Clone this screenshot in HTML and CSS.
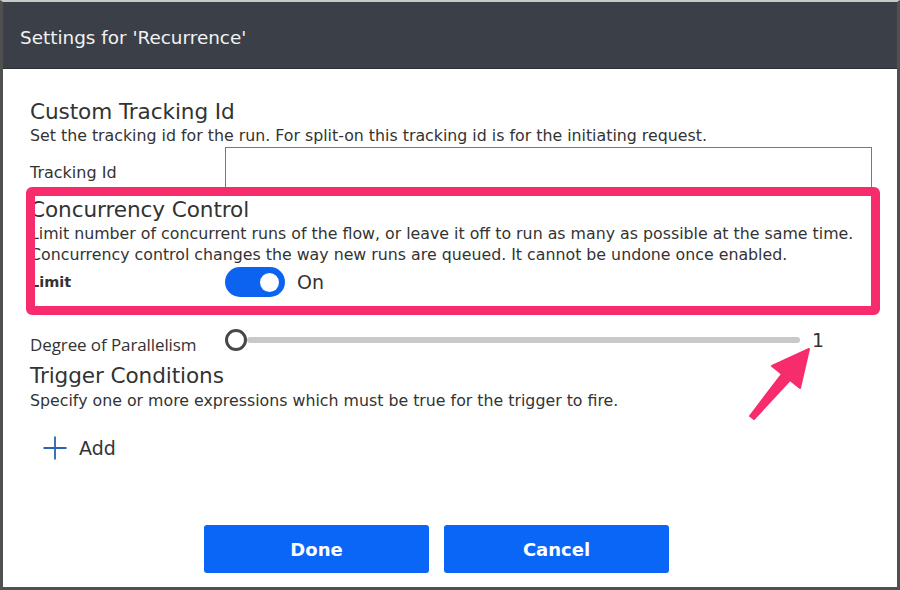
FILE: index.html
```html
<!DOCTYPE html>
<html>
<head>
<meta charset="utf-8">
<link rel="stylesheet" href="styles.css">
</head>
<body>
<div class="frame">
  <header class="header"><h1 class="title">Settings for 'Recurrence'</h1></header>
  <main class="content">
    <section class="section">
      <h2 class="heading">Custom Tracking Id</h2>
      <p class="desc">Set the tracking id for the run. For split-on this tracking id is for the initiating request.</p>
      <div class="row row-input">
        <label class="label">Tracking Id</label>
        <div class="input"></div>
      </div>
    </section>
    <section class="section sec-conc">
      <h2 class="heading">Concurrency Control</h2>
      <p class="desc desc-tight">Limit number of concurrent runs of the flow, or leave it off to run as many as possible at the same time.<br>Concurrency control changes the way new runs are queued. It cannot be undone once enabled.</p>
      <div class="row row-toggle">
        <label class="label label-bold">Limit</label>
        <div class="toggle"><span class="knob"></span></div>
        <span class="toggle-text">On</span>
      </div>
      <div class="row row-slider">
        <label class="label label-small">Degree of Parallelism</label>
        <div class="slider">
          <span class="thumb"></span>
          <span class="track"></span>
        </div>
        <span class="value">1</span>
      </div>
    </section>
    <section class="section sec-trigger">
      <h2 class="heading">Trigger Conditions</h2>
      <p class="desc">Specify one or more expressions which must be true for the trigger to fire.</p>
      <div class="add">
        <svg class="plus" width="24" height="24" viewBox="0 0 24 24"><path d="M12 0.5V23.5M0.5 12H23.5" stroke="#2866ab" stroke-width="1.8" fill="none"/></svg>
        <span class="add-text">Add</span>
      </div>
    </section>
    <footer class="footer">
      <button class="btn">Done</button>
      <button class="btn">Cancel</button>
    </footer>
  </main>
  <div class="highlight"></div>
  <svg class="arrow" width="900" height="590" viewBox="0 0 900 590">
    <polygon points="750,416 782,374 772,366 809,349 800,388 790,380 754,419" fill="#f72c6c" stroke="#f72c6c" stroke-width="2" stroke-linejoin="round"/>
  </svg>
</div>
</body>
</html>
```
FILE: styles.css
```css
* { box-sizing: border-box; }
html, body { margin: 0; padding: 0; background: #fff; }
body { width: 900px; height: 590px; overflow: hidden; font-family: "DejaVu Sans", Verdana, sans-serif; color: #333; }
.frame {
  position: relative;
  width: 900px; height: 590px;
  border-left: 3px solid #505050;
  border-right: 3px solid #505050;
  border-bottom: 3px solid #505050;
  border-top: 2px solid #c9c9c9;
  display: flex; flex-direction: column;
}
.header {
  height: 67px; background: #3b4048;
  display: flex; align-items: center;
  padding: 5px 0 0 17px;
  border-bottom: 1px solid #2c3036;
  flex: none;
}
.title { margin: 0; font-weight: normal; font-size: 18.4px; color: #f2f2f2; }
.content { flex: 1; padding: 31px 25px 0 27px; display: flex; flex-direction: column; }
.heading { margin: 0; font-weight: normal; font-size: 21.6px; line-height: 24px; color: #333; letter-spacing: -0.1px; }
.desc { margin: 1px 0 0; font-size: 15.8px; line-height: 22px; color: #333; }
.desc-tight { line-height: 21px; }
.row { display: flex; align-items: center; }
.label { width: 195px; flex: none; font-size: 16px; color: #333; }
.row-input { height: 48px; }
.row-input .label { padding-top: 3px; }
.input { flex: 1; height: 48px; border: 1px solid #7a7a7a; border-bottom: none; align-self: flex-start; }
.sec-conc { margin-top: 3px; }
.row-toggle { height: 30px; margin-top: 2px; }
.label-bold { font-weight: bold; font-size: 14.5px; }
.toggle { width: 60px; height: 30px; border-radius: 15px; background: #0b63ef; display: flex; align-items: center; justify-content: flex-end; padding-right: 6px; }
.knob { width: 19px; height: 19px; border-radius: 50%; background: #fff; }
.toggle-text { margin-left: 12px; font-size: 19px; color: #333; }
.row-slider { margin-top: 31px; height: 24px; align-items: flex-start; }
.label-small { font-family: "Open Sans", "Noto Sans", sans-serif; font-size: 17px; line-height: 24px; padding-top: 5px; letter-spacing: -0.1px; }
.slider { width: 575px; display: flex; align-items: center; height: 24px; }
.thumb { width: 22px; height: 22px; border-radius: 50%; border: 3px solid #474747; background: #fff; flex: none; }
.track { flex: 1; height: 6px; border-radius: 3px; background: #c9c9c9; }
.value { margin-left: 12px; font-size: 19px; line-height: 24px; color: #333; }
.sec-trigger { margin-top: 12px; }
.sec-trigger .desc { margin-top: 2px; }
.add { display: flex; align-items: center; margin-top: 24px; margin-left: 13px; height: 24px; }
.plus { flex: none; }
.add-text { margin-left: 12px; font-size: 19px; color: #333; }
.footer { display: flex; gap: 15px; margin-top: 65px; padding-left: 174px; }
.btn {
  width: 225px; height: 48px; border: none; border-radius: 3px;
  background: #0a66f6; color: #fff;
  font-family: "DejaVu Sans", Verdana, sans-serif; font-weight: bold; font-size: 18px;
}
.highlight {
  position: absolute; left: 23px; top: 185px; width: 854px; height: 128px;
  border: 9px solid #f72c6c; border-radius: 6px;
}
.arrow { position: absolute; left: -3px; top: -2px; pointer-events: none; }
```
